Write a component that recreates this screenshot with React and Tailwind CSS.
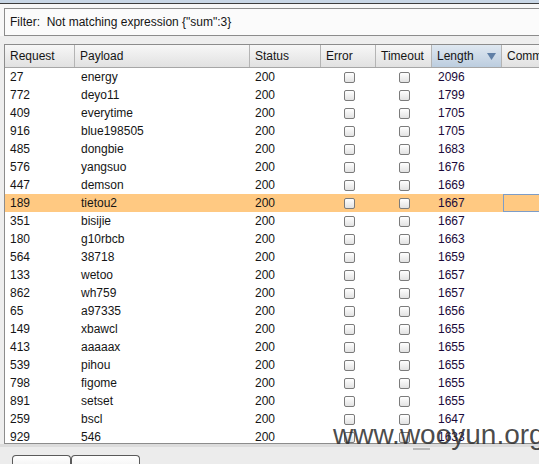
import React from "react";

const rows = [
  ["27", "energy", "2096"],
  ["772", "deyo11", "1799"],
  ["409", "everytime", "1705"],
  ["916", "blue198505", "1705"],
  ["485", "dongbie", "1683"],
  ["576", "yangsuo", "1676"],
  ["447", "demson", "1669"],
  ["189", "tietou2", "1667"],
  ["351", "bisijie", "1667"],
  ["180", "g10rbcb", "1663"],
  ["564", "38718", "1659"],
  ["133", "wetoo", "1657"],
  ["862", "wh759", "1657"],
  ["65", "a97335", "1656"],
  ["149", "xbawcl", "1655"],
  ["413", "aaaaax", "1655"],
  ["539", "pihou", "1655"],
  ["798", "figome", "1655"],
  ["891", "setset", "1655"],
  ["259", "bscl", "1647"],
  ["929", "546", "1633"],
];

function Check() {
  return (
    <div className="w-[11px] h-[11px] rounded-[2px] border border-[#7b7b7b] bg-gradient-to-b from-[#ffffff] to-[#e2e2e2]" />
  );
}

function Head({ w, children, active }) {
  return (
    <div
      className={
        "h-full flex items-center pl-[5px] border-r border-[#b4b4b4] shrink-0 relative " +
        (active
          ? "bg-gradient-to-b from-[#dfe8f1] to-[#bccddf]"
          : "bg-gradient-to-b from-[#f7f7f7] to-[#e1e1e1]")
      }
      style={{ width: w }}
    >
      {children}
    </div>
  );
}

export default function App() {
  return (
    <div
      className="relative w-[539px] h-[464px] overflow-hidden bg-[#eeeeee] text-[12px] text-[#151515]"
      style={{ fontFamily: '"Liberation Sans", Arial, sans-serif' }}
    >
      <div className="h-[3px] bg-[#c8d6e5]" />
      <div className="h-px bg-[#3c3c3c]" />
      <div className="bg-[#f7f7f7] pt-[4px] pl-[4px] w-[600px]">
        <div className="h-[28px] border border-[#8c8c8c] bg-[#fbfbfb] flex items-center pl-[5px]">
          Filter:&nbsp; Not matching expression {'{"sum":3}'}
        </div>
      </div>
      <div className="h-[8px] bg-[#eeeeee]" />
      {/* table */}
      <div className="ml-[4px] w-[600px] h-[400px] border-l border-t border-b border-[#8c8c8c] bg-white overflow-hidden">
        <div className="h-[23px] flex border-b border-[#a6a6a6]">
          <Head w={70}>Request</Head>
          <Head w={175}>Payload</Head>
          <Head w={71}>Status</Head>
          <Head w={55}>Error</Head>
          <Head w={56}>Timeout</Head>
          <Head w={70} active>
            <span>Length</span>
            <svg className="absolute right-[5px] top-[8px]" width="9" height="7" viewBox="0 0 9 7">
              <path d="M0 0 H9 L4.5 7 Z" fill="#5f7fa6" />
            </svg>
          </Head>
          <Head w={100}>Comment</Head>
        </div>
        {rows.map((r, i) => {
          const hl = i === 7;
          return (
            <div
              key={i}
              className={"h-[18px] flex items-center " + (hl ? "bg-[#ffc982]" : "bg-white")}
            >
              <div className="w-[70px] pl-[5px] shrink-0">{r[0]}</div>
              <div className="w-[175px] pl-[6px] shrink-0">{r[1]}</div>
              <div className="w-[71px] pl-[5px] shrink-0">200</div>
              <div className="w-[55px] shrink-0 flex justify-center pl-[2px]">
                <Check />
              </div>
              <div className="w-[56px] shrink-0 flex justify-center">
                <Check />
              </div>
              <div className="w-[70px] pl-[6px] shrink-0 text-[#1a0a3a]">{r[2]}</div>
              <div
                className={
                  "w-[100px] h-full shrink-0 " + (hl ? "border border-[#7d9dc8] ml-px" : "")
                }
              />
            </div>
          );
        })}
      </div>
      {/* bottom area */}
      <div className="relative h-[20px] bg-[#ececec]">
        <div className="h-[3px] bg-[#dcdcdc]" />
        <div className="absolute left-[413px] top-[4px] w-[17px] h-[2px] bg-[#b8b8b8]" />
        <div className="flex pl-[12px] pt-[8px]">
          <div className="w-[59px] h-[14px] border border-[#5a5a5a] border-b-0 rounded-t-[4px] bg-gradient-to-b from-[#ffffff] to-[#efefef]" />
          <div className="w-[69px] h-[14px] border border-[#5a5a5a] border-b-0 rounded-t-[4px] bg-gradient-to-b from-[#ffffff] to-[#f2f2f2]" />
        </div>
      </div>
      <div
        className="absolute left-[333px] top-[421px] text-[28px] leading-none text-[#2b2b2b]/85 whitespace-nowrap"
        style={{ fontFamily: '"Liberation Sans", Arial, sans-serif' }}
      >
        www.wooyun.org
      </div>
    </div>
  );
}
